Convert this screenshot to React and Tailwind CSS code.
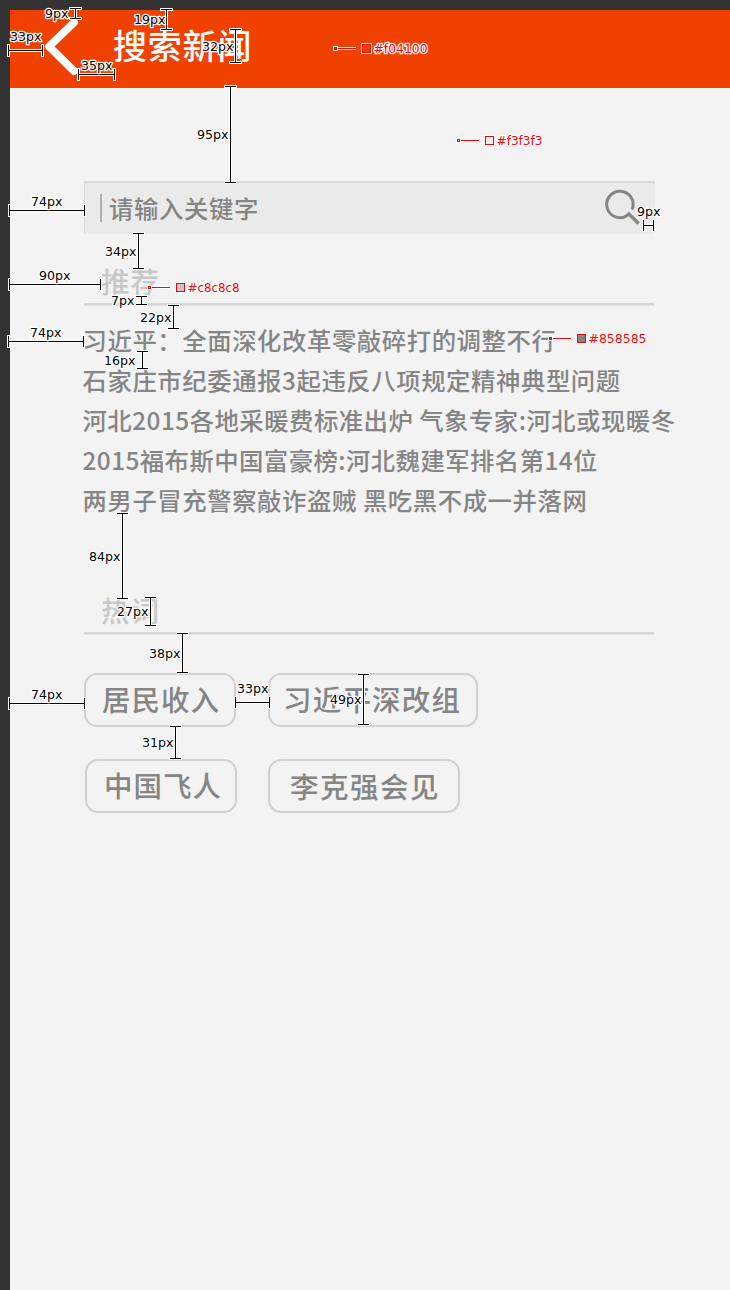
import React from "react";

const news = [
  { title: "习近平：全面深化改革零敲碎打的调整不行", tracking: "tracking-[0.55px]" },
  { title: "石家庄市纪委通报3起违反八项规定精神典型问题", tracking: "tracking-[0.55px]" },
  { title: "河北2015各地采暖费标准出炉 气象专家:河北或现暖冬", tracking: "tracking-[0.46px]" },
  { title: "2015福布斯中国富豪榜:河北魏建军排名第14位", tracking: "tracking-[0.42px]" },
  { title: "两男子冒充警察敲诈盗贼 黑吃黑不成一并落网", tracking: "tracking-[0.55px]" },
];

// Vertical measures: x, top, bottom, label, label x, label baseline
const vertical = [
  [76, 8, 18, "9px", 45, 18],
  [167, 9, 29, "19px", 134, 24],
  [236, 29, 62, "32px", 202, 51],
  [231, 86, 182, "95px", 197, 139],
  [139, 233, 268, "34px", 105, 256],
  [142, 296, 304, "7px", 111, 305],
  [174, 305, 328, "22px", 140, 322],
  [143, 351, 368, "16px", 104, 365],
  [123, 513, 598, "84px", 89, 561],
  [151, 597, 625, "27px", 117, 616],
  [183, 633, 672, "38px", 149, 658],
  [364, 674, 724, "49px", 330, 704],
  [176, 726, 758, "31px", 142, 747],
];

// Horizontal measures: y, left, right, label, label x, label baseline
const horizontal = [
  [50, 8, 42, "33px", 10, 41],
  [74, 78, 114, "35px", 81, 70],
  [210, 9, 84, "74px", 31, 206],
  [225, 643, 653, "9px", 637, 216],
  [284, 9, 100, "90px", 39, 280],
  [341, 8, 83, "74px", 30, 337],
  [703, 9, 84, "74px", 31, 699],
  [702, 235, 269, "33px", 237, 693],
];

// Colour pickers: x, y, swatch colour, label, label width
const colours = [
  [334, 48, "#f04100", "#f04100", 54],
  [457, 140, "#f3f3f3", "#f3f3f3", 46],
  [148, 287, "#c8c8c8", "#c8c8c8", 52],
  [549, 338, "#858585", "#858585", 58],
];

function Label({ x, y, text, width, fill }) {
  return (
    <text
      x={x}
      y={y}
      textLength={width}
      lengthAdjust="spacingAndGlyphs"
      fill={fill}
      stroke="#fff"
      strokeWidth="2.5"
      strokeLinejoin="round"
      paintOrder="stroke"
    >
      {text}
    </text>
  );
}

function Measure({ d, text, x, y }) {
  return (
    <g>
      <path d={d} fill="none" stroke="#fff" strokeWidth="3" strokeLinecap="square" />
      <path d={d} fill="none" stroke="#000" strokeWidth="1" strokeLinecap="square" />
      <Label x={x} y={y} text={text} width={text.length === 4 ? 31.5 : 23.5} fill="#000" />
    </g>
  );
}

function Annotations() {
  return (
    <svg
      className="pointer-events-none absolute top-0 left-0 font-['DejaVu_Sans',sans-serif] text-[12.5px]"
      width="730"
      height="1290"
      viewBox="0 0 730 1290"
    >
      {vertical.map(([x, t, b, text, lx, ly]) => (
        <Measure
          key={`v${x}-${t}`}
          d={`M${x - 5.5} ${t + 0.5}h10M${x - 5.5} ${b + 0.5}h10M${x - 0.5} ${t + 0.5}V${b + 0.5}`}
          text={text}
          x={lx}
          y={ly}
        />
      ))}
      {horizontal.map(([y, l, r, text, lx, ly]) => (
        <Measure
          key={`h${y}-${l}`}
          d={`M${l + 0.5} ${y - 4.5}v10M${r + 0.5} ${y - 4.5}v10M${l + 0.5} ${y + 0.5}H${r + 0.5}`}
          text={text}
          x={lx}
          y={ly}
        />
      ))}
      {colours.map(([x, y, colour, text, width]) => (
        <g key={text}>
          <path d={`M${x + 3} ${y + 0.5}h19`} stroke="#fff" strokeWidth="3" />
          <path d={`M${x + 3} ${y + 0.5}h19`} stroke="#f00" strokeWidth="1" />
          <rect x={x - 1} y={y - 2} width="5" height="5" fill="#fff" />
          <rect x={x + 0.5} y={y - 0.5} width="2" height="2" fill={colour} stroke="#f00" />
          <rect x={x + 27} y={y - 5} width="11" height="11" fill="#fff" />
          <rect x={x + 28.5} y={y - 3.5} width="8" height="8" fill={colour} stroke="#f00" />
          <Label x={x + 39.5} y={y + 5} text={text} width={width} fill="#f00" />
        </g>
      ))}
    </svg>
  );
}

function SectionTitle({ children }) {
  return (
    <h2 className="h-[42px] w-[570px] border-b-2 border-[#d5d5d5] pl-[17px] text-[28.5px] leading-[36px] font-medium tracking-[1px] text-[#c8c8c8] shadow-[0_1px_0_#e2e2e2]">
      {children}
    </h2>
  );
}

function Tag({ className, children }) {
  return (
    <button
      className={`h-[54px] shrink-0 rounded-[13px] border-2 border-[#d0d0d0] text-left text-[28.5px] font-medium whitespace-nowrap text-[#858585] ${className}`}
    >
      {children}
    </button>
  );
}

export default function App() {
  return (
    <div className="relative h-[1290px] w-[730px] overflow-hidden bg-[#333333] pt-[10px] pl-[10px] font-['Noto_Sans_CJK_SC',sans-serif]">
      <div className="h-[1280px] bg-[#f3f3f3]">
        <header className="flex h-[78px] bg-[#f04100] pl-[34px] text-white">
          <svg className="mt-[6px] shrink-0" width="36" height="62" viewBox="0 0 36 62">
            <path d="M30 6.5L5 30.5l25 24.5" fill="none" stroke="currentColor" strokeWidth="7.8" strokeLinecap="round" strokeLinejoin="round" />
          </svg>
          <h1 className="ml-[33px] text-[34px] leading-[70px] font-medium tracking-[0.8px]">搜索新闻</h1>
        </header>

        <main className="pl-[74px]">
          <div className="mt-[93px] flex h-[53px] w-[571px] border-t-2 border-l border-[#dadada] bg-[#eaeaea]">
            <span className="mt-[11px] ml-[15px] h-[28px] w-[2px] bg-[#b0b0b0]" />
            <span className="ml-[7px] text-[24.4px] leading-[50px] tracking-[0.6px] text-[#858585] font-medium">请输入关键字</span>
            <svg className="mt-[6px] ml-auto mr-[14px] shrink-0" width="38" height="38" viewBox="0 0 38 38" fill="none" stroke="#858585">
              <path d="M29.1 20.5A13.2 13.2 0 1 0 25.3 25.6" strokeWidth="3" />
              <path d="M24.8 23.8L35.6 34.5" strokeWidth="3.3" />
            </svg>
          </div>

          <section className="mt-[29px]">
            <SectionTitle>推荐</SectionTitle>
            <ul className="mt-[15px] -ml-[1.5px] text-[24.4px] leading-[40px] font-medium whitespace-nowrap text-[#858585]">
              {news.map(({ title, tracking }) => (
                <li key={title} className={tracking}>
                  {title}
                </li>
              ))}
            </ul>
          </section>

          <section className="mt-[72px]">
            <SectionTitle>热词</SectionTitle>
            <div className="mt-[39px] flex gap-[32px]">
              <Tag className="w-[152px] pl-[16px] pb-[2px] leading-[44px] tracking-[1px]">居民收入</Tag>
              <Tag className="w-[210px] pl-[13px] pb-[2px] leading-[44px] tracking-[1.2px]">习近平深改组</Tag>
            </div>
            <div className="mt-[32px] ml-px flex gap-[31px]">
              <Tag className="w-[152px] pl-[17px] pb-[2px] leading-[44px] tracking-[1px]">中国飞人</Tag>
              <Tag className="w-[192px] pl-[20px] leading-[50px] tracking-[1.5px]">李克强会见</Tag>
            </div>
          </section>
        </main>
      </div>
      <Annotations />
    </div>
  );
}
